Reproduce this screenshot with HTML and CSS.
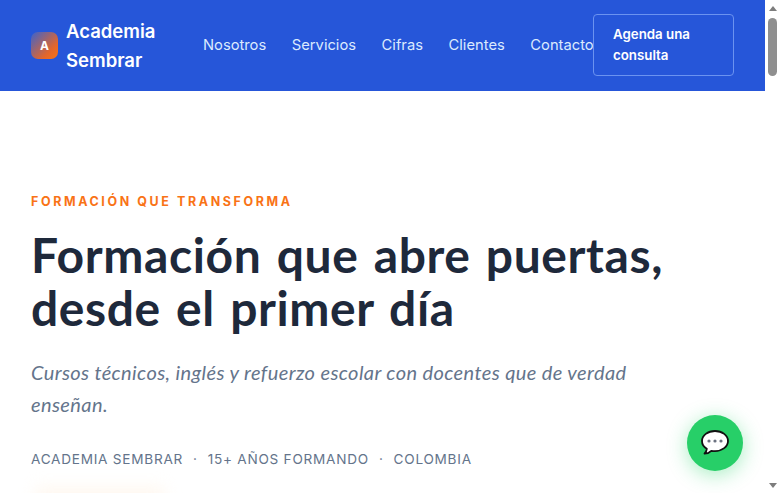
FILE: index.html
```html
<!DOCTYPE html>
<html lang="es">
<head>
<meta charset="utf-8">
<title>Academia Sembrar</title>
<link rel="stylesheet" href="styles.css">
</head>
<body>
<div class="page">
<header class="nav">
  <a class="brand" href="#">
    <span class="brand-mark">A</span>
    <span class="brand-name">Academia Sembrar</span>
  </a>
  <nav class="links">
    <a href="#">Nosotros</a>
    <a href="#">Servicios</a>
    <a href="#">Cifras</a>
    <a href="#">Clientes</a>
    <a href="#">Contacto</a>
  </nav>
  <a class="cta" href="#">Agenda una consulta</a>
</header>
<main class="hero">
  <p class="eyebrow">FORMACIÓN QUE TRANSFORMA</p>
  <h1 class="title">Formación que abre puertas, desde el primer día</h1>
  <p class="lead">Cursos técnicos, inglés y refuerzo escolar con docentes que de verdad enseñan.</p>
  <p class="meta"><span>ACADEMIA SEMBRAR</span><span>·</span><span>15+ AÑOS FORMANDO</span><span>·</span><span>COLOMBIA</span></p>
  <div class="glow"></div>
</main>
</div>
<div class="scrollbar" aria-hidden="true">
  <span class="arrow-up"></span>
  <span class="thumb"></span>
  <span class="arrow-down"></span>
</div>
<a class="chat" href="#" aria-label="Chat">
  <svg width="28" height="28" viewBox="0 0 28 28">
    <path d="M14 2C6.800 2 1 6.400 1 12c0 3.200 1.900 6 4.800 7.800-.2 1.800-1 3.500-2.300 4.900 2.800 0 5-1.100 6.800-2.900 1.200.2 2.400.3 3.700.3 7.200 0 13-4.500 13-10.100S21.200 2 14 2z" fill="#fff" stroke="#111" stroke-width="1.800" stroke-linejoin="round"/>
    <circle cx="8" cy="12" r="1.600" fill="#6b7280"/>
    <circle cx="14" cy="12" r="1.600" fill="#6b7280"/>
    <circle cx="20" cy="12" r="1.600" fill="#6b7280"/>
  </svg>
</a>
</body>
</html>
```
FILE: styles.css
```css
* { box-sizing: border-box; }
html, body { margin: 0; padding: 0; height: 100%; overflow: hidden; }
body { display: flex; font-family: Inter, "Liberation Sans", sans-serif; background: #fff; color: #1e293b; }
a { text-decoration: none; color: inherit; }
.page { flex: 1; min-width: 0; height: 100vh; overflow: hidden; }
.scrollbar { flex: none; width: 15px; height: 100vh; padding: 6px 3px 5px; display: flex; flex-direction: column; align-items: center; background: #fff; }
.arrow-up { flex: none; width: 0; height: 0; border-left: 4px solid transparent; border-right: 4px solid transparent; border-bottom: 5px solid #7d7d7d; }
.thumb { flex: none; width: 9px; height: 58px; margin-top: 7px; border-radius: 5px; background: #8f8f8f; }
.arrow-down { flex: none; width: 0; height: 0; margin-top: auto; border-left: 4px solid transparent; border-right: 4px solid transparent; border-top: 5px solid #7d7d7d; }
.nav { height: 91px; background: #2656d9; display: flex; align-items: center; padding: 0 31px 1px; }
.brand { display: flex; align-items: center; gap: 8px; width: 135px; flex: none; color: #fff; }
.brand-mark { flex: none; width: 27px; height: 27px; border-radius: 7px; background: linear-gradient(135deg, #3b63cf, #e2662c 70%, #f97316); color: #fff; font-size: 12px; font-weight: 700; display: flex; align-items: center; justify-content: center; }
.brand-name { padding-top: 2px; font-size: 18.500px; font-weight: 600; line-height: 29.440px; }
.links { display: flex; gap: 25.600px; margin-left: 37px; width: 390px; flex: none; font-size: 14.720px; color: #dbeafe; }
.cta { flex: none; width: 141px; height: 62px; border: 1px solid #6b93f0; border-radius: 4px; padding: 9px 19px; color: #fff; font-size: 13.300px; font-weight: 600; line-height: 21px; }
.hero { position: relative; height: 3800px; padding: 103px 31px 0; }
.eyebrow { margin: 0; font-size: 12.480px; font-weight: 700; letter-spacing: 2.600px; line-height: 15px; color: #f97316; }
.title { margin: 20px 0 0; max-width: 680px; font-family: Lato, sans-serif; font-size: 48px; line-height: 52.800px; font-weight: 700; letter-spacing: .6px; word-spacing: 3px; color: #1e293b; }
.lead { margin: 21px 0 0; max-width: 620px; font-family: Lato, sans-serif; font-style: italic; font-size: 20px; line-height: 32px; letter-spacing: .4px; color: #64748b; }
.meta { margin: 29px 0 0; display: flex; gap: 10px; font-size: 13.600px; line-height: 20px; letter-spacing: .75px; color: #64748b; }
.glow { position: absolute; left: 35px; top: 396px; width: 130px; height: 30px; background: #fff3e6; filter: blur(8px); opacity: .6; }
.chat { position: fixed; right: 37px; bottom: 22px; width: 56px; height: 56px; border-radius: 50%; background: #27cf68; display: flex; align-items: center; justify-content: center; box-shadow: 0 4px 20px rgba(37, 211, 102, .4); }
```
